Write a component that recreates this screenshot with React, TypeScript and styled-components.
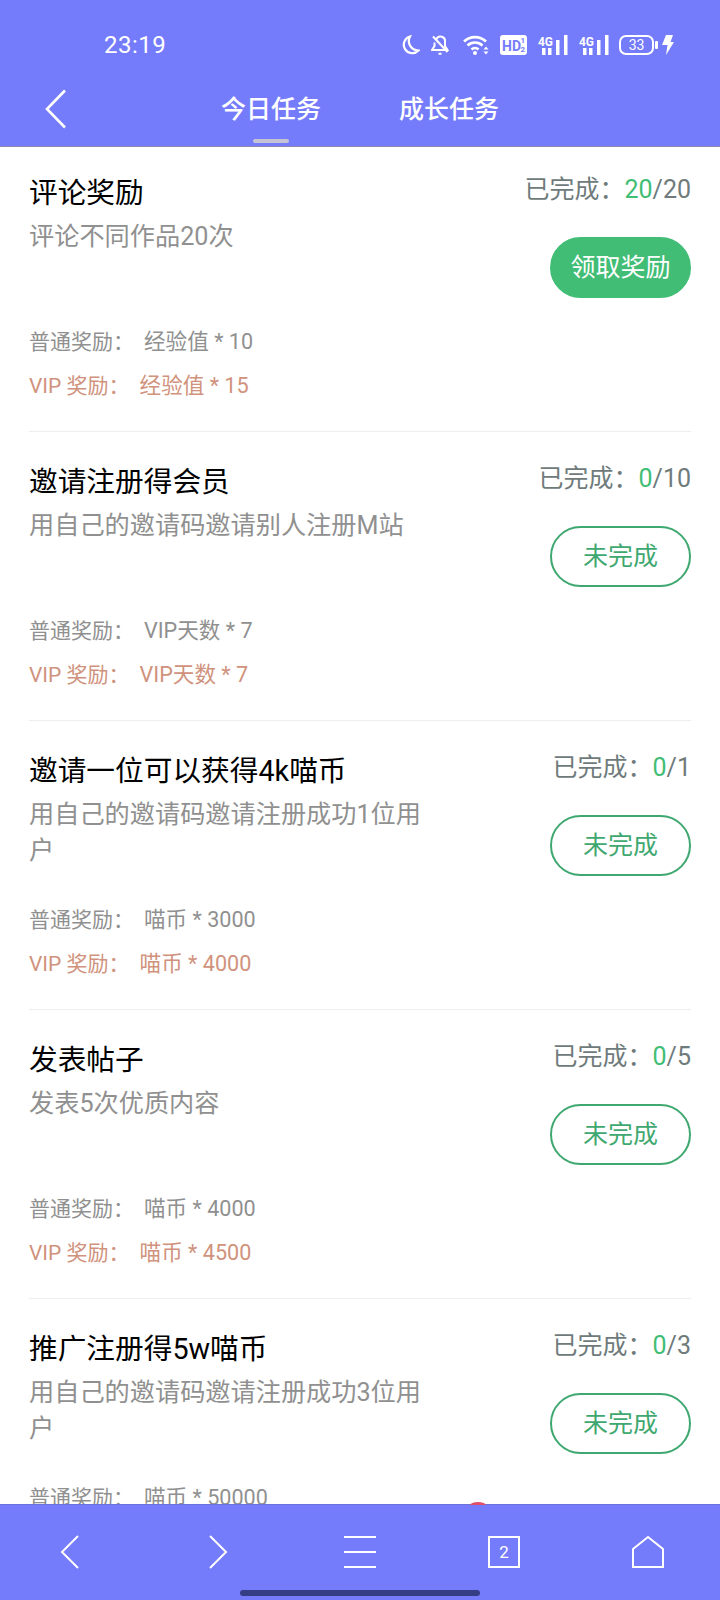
import styled, { createGlobalStyle } from 'styled-components';

type Task = {
  title: string;
  desc: string;
  done: number;
  total: number;
  normal: string;
  vip: string;
};

const TASKS: Task[] = [
  { title: '评论奖励', desc: '评论不同作品20次', done: 20, total: 20, normal: '经验值 * 10', vip: '经验值 * 15' },
  { title: '邀请注册得会员', desc: '用自己的邀请码邀请别人注册M站', done: 0, total: 10, normal: 'VIP天数 * 7', vip: 'VIP天数 * 7' },
  { title: '邀请一位可以获得4k喵币', desc: '用自己的邀请码邀请注册成功1位用户', done: 0, total: 1, normal: '喵币 * 3000', vip: '喵币 * 4000' },
  { title: '发表帖子', desc: '发表5次优质内容', done: 0, total: 5, normal: '喵币 * 4000', vip: '喵币 * 4500' },
  { title: '推广注册得5w喵币', desc: '用自己的邀请码邀请注册成功3位用户', done: 0, total: 3, normal: '喵币 * 50000', vip: '喵币 * 60000' },
];

const GlobalStyle = createGlobalStyle`
  html, body {
    margin: 0;
    padding: 0;
    background: #fff;
  }
  * {
    box-sizing: border-box;
  }
`;

const SignalIcon = () => (
  <svg width="30" height="20" viewBox="0 0 30 20" fill="#fff">
    <text x="0" y="11" fontSize="13" fontWeight="700" textLength="15" lengthAdjust="spacingAndGlyphs" fontFamily="Roboto, sans-serif">4G</text>
    <rect x="4" y="13" width="3.500" height="7" />
    <rect x="10" y="13" width="3.500" height="7" />
    <rect x="18" y="5" width="3.500" height="15" />
    <rect x="26" y="0" width="3.500" height="20" />
  </svg>
);

const StatusIcons = () => (
  <StatusRight>
    <svg width="18" height="20" viewBox="0 0 18 20" fill="none" stroke="#fff" strokeWidth="2.200">
      <path d="M8 1.500a8.500 8.500 0 1 0 8.500 14A9.500 9.500 0 0 1 8 1.500z" />
    </svg>
    <StatusGap $gap={11}>
      <svg width="18" height="20" viewBox="0 0 18 20" fill="none" stroke="#fff" strokeWidth="2">
        <path d="M5.500 4A4.500 4.500 0 0 1 14 6.500V11l2.500 4H7M3.500 7.500V11L1 15h6M2 1.500L16.500 17M7.500 18.800h3" />
      </svg>
    </StatusGap>
    <StatusGap $gap={14}>
      <svg width="26" height="20" viewBox="0 0 26 20" fill="none" stroke="#fff" strokeWidth="2.600">
        <path d="M1 6.500a16 16 0 0 1 22 0M4.500 10.500a11 11 0 0 1 15 0M8.500 14.500a5 5 0 0 1 7 0" />
        <circle cx="12" cy="18" r="2" fill="#fff" stroke="none" />
        <path d="M23 11.500l2.500 3h-5zM23 19.500l2.500-3h-5z" fill="#fff" stroke="none" />
      </svg>
    </StatusGap>
    <StatusGap $gap={11}>
      <svg width="27" height="20" viewBox="0 0 27 20">
        <rect width="27" height="20" rx="3" fill="#fff" />
        <text x="2" y="15.500" fontSize="14" fontWeight="700" fill="#757cfb" fontFamily="Roboto, sans-serif">HD</text>
        <text x="20.500" y="8" fontSize="8" fontWeight="700" fill="#757cfb" fontFamily="Roboto, sans-serif">1</text>
        <text x="20.500" y="17" fontSize="8" fontWeight="700" fill="#757cfb" fontFamily="Roboto, sans-serif">2</text>
      </svg>
    </StatusGap>
    <StatusGap $gap={11}>
      <SignalIcon />
    </StatusGap>
    <StatusGap $gap={11}>
      <SignalIcon />
    </StatusGap>
    <StatusGap $gap={10}>
      <svg width="39" height="20" viewBox="0 0 39 20" fill="none">
        <rect x="1" y="1" width="33" height="18" rx="6" stroke="#fff" strokeWidth="2" />
        <rect x="36" y="6" width="3" height="8" rx="1" fill="#fff" />
        <text x="17.500" y="15" textAnchor="middle" fontSize="14" fill="#fff" fontFamily="Roboto, sans-serif">33</text>
      </svg>
    </StatusGap>
    <StatusGap $gap={4}>
      <svg width="12" height="20" viewBox="0 0 12 20">
        <path d="M4 0h7L8.500 7H12L4 20l1.500-10H0z" fill="#fff" />
      </svg>
    </StatusGap>
  </StatusRight>
);

const TaskCard = ({ task }: { task: Task }) => {
  const finished = task.done >= task.total;
  return (
    <Card>
      <CardTop>
        <CardText>
          <Title>{task.title}</Title>
          <Desc>{task.desc}</Desc>
        </CardText>
        <CardSide>
          <Progress>
            已完成：<em>{task.done}</em>/{task.total}
          </Progress>
          <ActionButton $filled={finished}>{finished ? '领取奖励' : '未完成'}</ActionButton>
        </CardSide>
      </CardTop>
      <Reward>
        <RewardLabel>普通奖励：</RewardLabel>
        <RewardValue>{task.normal}</RewardValue>
      </Reward>
      <Reward $vip>
        <RewardLabel>VIP 奖励：</RewardLabel>
        <RewardValue>{task.vip}</RewardValue>
      </Reward>
    </Card>
  );
};

export default function App() {
  return (
    <Page>
      <GlobalStyle />
      <Header>
        <StatusBar>
          <Clock>23:19</Clock>
          <StatusIcons />
        </StatusBar>
        <NavBar>
          <BackButton width="28" height="42" viewBox="0 0 28 42" fill="none" stroke="#fff" strokeWidth="2.600">
            <path d="M21 2.500L3 21l18 18.500" />
          </BackButton>
          <Tab $active>今日任务</Tab>
          <Tab>成长任务</Tab>
        </NavBar>
      </Header>
      <List>
        {TASKS.map((task) => (
          <TaskCard key={task.title} task={task} />
        ))}
      </List>
      <Footer>
        <RedDot />
        <FooterIcons>
          <FooterCell $shift={-4}>
            <svg width="20" height="34" viewBox="0 0 20 34" fill="none" stroke="#fff" strokeWidth="2">
              <path d="M18 1L2 17l16 16" />
            </svg>
          </FooterCell>
          <FooterCell $shift={4}>
            <svg width="20" height="34" viewBox="0 0 20 34" fill="none" stroke="#fff" strokeWidth="2">
              <path d="M2 1l16 16L2 33" />
            </svg>
          </FooterCell>
          <FooterCell>
            <svg width="32" height="34" viewBox="0 0 32 34" fill="none" stroke="#fff" strokeWidth="2">
              <path d="M0 2h32M0 17h32M0 32h32" />
            </svg>
          </FooterCell>
          <FooterCell>
            <PageCount>2</PageCount>
          </FooterCell>
          <FooterCell>
            <svg width="32" height="34" viewBox="0 0 32 34" fill="none" stroke="#fff" strokeWidth="2">
              <path d="M1 14L16 2l15 12v18H1z" />
            </svg>
          </FooterCell>
        </FooterIcons>
        <HomeBar />
      </Footer>
    </Page>
  );
}

const Page = styled.div`
  width: 720px;
  height: 1600px;
  display: flex;
  flex-direction: column;
  overflow: hidden;
  font-family: Roboto, 'Noto Sans CJK SC', sans-serif;
`;

const Header = styled.header`
  flex: none;
  height: 147px;
  background: #757cfb;
  border-bottom: 1px solid #8a86b4;
  color: #fff;
`;

const StatusBar = styled.div`
  height: 88px;
  padding: 30px 46px 0 104px;
  display: flex;
  justify-content: space-between;
`;

const Clock = styled.div`
  font-size: 24px;
  line-height: 30px;
  letter-spacing: 0.5px;
`;

const StatusRight = styled.div`
  display: flex;
  align-items: flex-start;
  height: 30px;
  padding-top: 5px;
`;

const StatusGap = styled.span<{ $gap: number }>`
  display: flex;
  margin-left: ${(p) => p.$gap}px;
`;

const NavBar = styled.nav`
  position: relative;
  display: flex;
  justify-content: center;
  gap: 78px;
  padding-top: 1px;
`;

const BackButton = styled.svg`
  position: absolute;
  left: 44px;
  top: 0;
`;

const Tab = styled.div<{ $active?: boolean }>`
  position: relative;
  font-size: 25px;
  line-height: 42px;
  font-weight: 500;

  &::after {
    content: '';
    display: ${(p) => (p.$active ? 'block' : 'none')};
    position: absolute;
    left: 50%;
    bottom: -12px;
    width: 36px;
    height: 4px;
    margin-left: -18px;
    border-radius: 2px;
    background: #c4c4d4;
  }
`;

const List = styled.main`
  flex: 1;
  min-height: 0;
  overflow: hidden;
  padding: 0 29px;
  background: #fff;
`;

const Card = styled.section`
  height: 289px;
  padding-top: 30px;
  border-bottom: 1px solid #eeeeee;

  &:first-child {
    height: 285px;
    padding-top: 26px;
  }

  &:last-child {
    border-bottom: 0;
  }
`;

const CardTop = styled.div`
  height: 147px;
  display: flex;
  justify-content: space-between;
`;

const CardText = styled.div`
  width: 410px;
`;

const Title = styled.h3`
  margin: 0;
  font-size: 28.7px;
  line-height: 40px;
  font-weight: 400;
  color: #000;
`;

const Desc = styled.p`
  margin: 6px 0 0;
  font-size: 25.2px;
  line-height: 36px;
  color: #909090;
`;

const CardSide = styled.div`
  display: flex;
  flex-direction: column;
  align-items: flex-end;
`;

const Progress = styled.div`
  font-size: 25px;
  line-height: 34px;
  color: #6f7b7b;

  em {
    font-style: normal;
    color: #41bd75;
  }
`;

const ActionButton = styled.div<{ $filled?: boolean }>`
  width: 141px;
  height: 61px;
  margin-top: 30px;
  padding-bottom: 6px;
  border-radius: 31px;
  display: flex;
  align-items: center;
  justify-content: center;
  font-size: 25px;
  border: 2px solid ${(p) => (p.$filled ? '#41bd75' : '#3fa870')};
  color: ${(p) => (p.$filled ? '#fff' : '#3fa870')};
  background: ${(p) => (p.$filled ? '#41bd75' : '#fff')};
`;

const Reward = styled.div<{ $vip?: boolean }>`
  font-size: 21px;
  line-height: 44px;
  color: ${(p) => (p.$vip ? '#d0927c' : '#909090')};
`;

const RewardLabel = styled.span`
  margin-right: 10px;
`;

const RewardValue = styled.span`
  font-size: 21.6px;
`;

const Footer = styled.footer`
  position: relative;
  flex: none;
  height: 96px;
  background: #757cfb;
  border-top: 1px solid #6a70dc;
`;

const RedDot = styled.div`
  position: absolute;
  left: 470px;
  top: -3px;
  width: 16px;
  height: 3px;
  border-radius: 8px 8px 0 0 / 3px 3px 0 0;
  background: #e0506a;
`;

const FooterIcons = styled.div`
  padding: 30px 0 0;
  display: grid;
  grid-template-columns: repeat(5, 144px);
`;

const FooterCell = styled.div<{ $shift?: number }>`
  display: flex;
  justify-content: center;
  align-items: center;
  height: 34px;

  & > svg {
    margin-left: ${(p) => p.$shift ?? 0}px;
  }
`;

const PageCount = styled.div`
  width: 32px;
  height: 32px;
  border: 2px solid #fff;
  color: #fff;
  font-size: 17px;
  display: flex;
  align-items: center;
  justify-content: center;
`;

const HomeBar = styled.div`
  position: absolute;
  left: 240px;
  bottom: 4px;
  width: 240px;
  height: 6px;
  border-radius: 3px;
  background: #353d85;
`;
